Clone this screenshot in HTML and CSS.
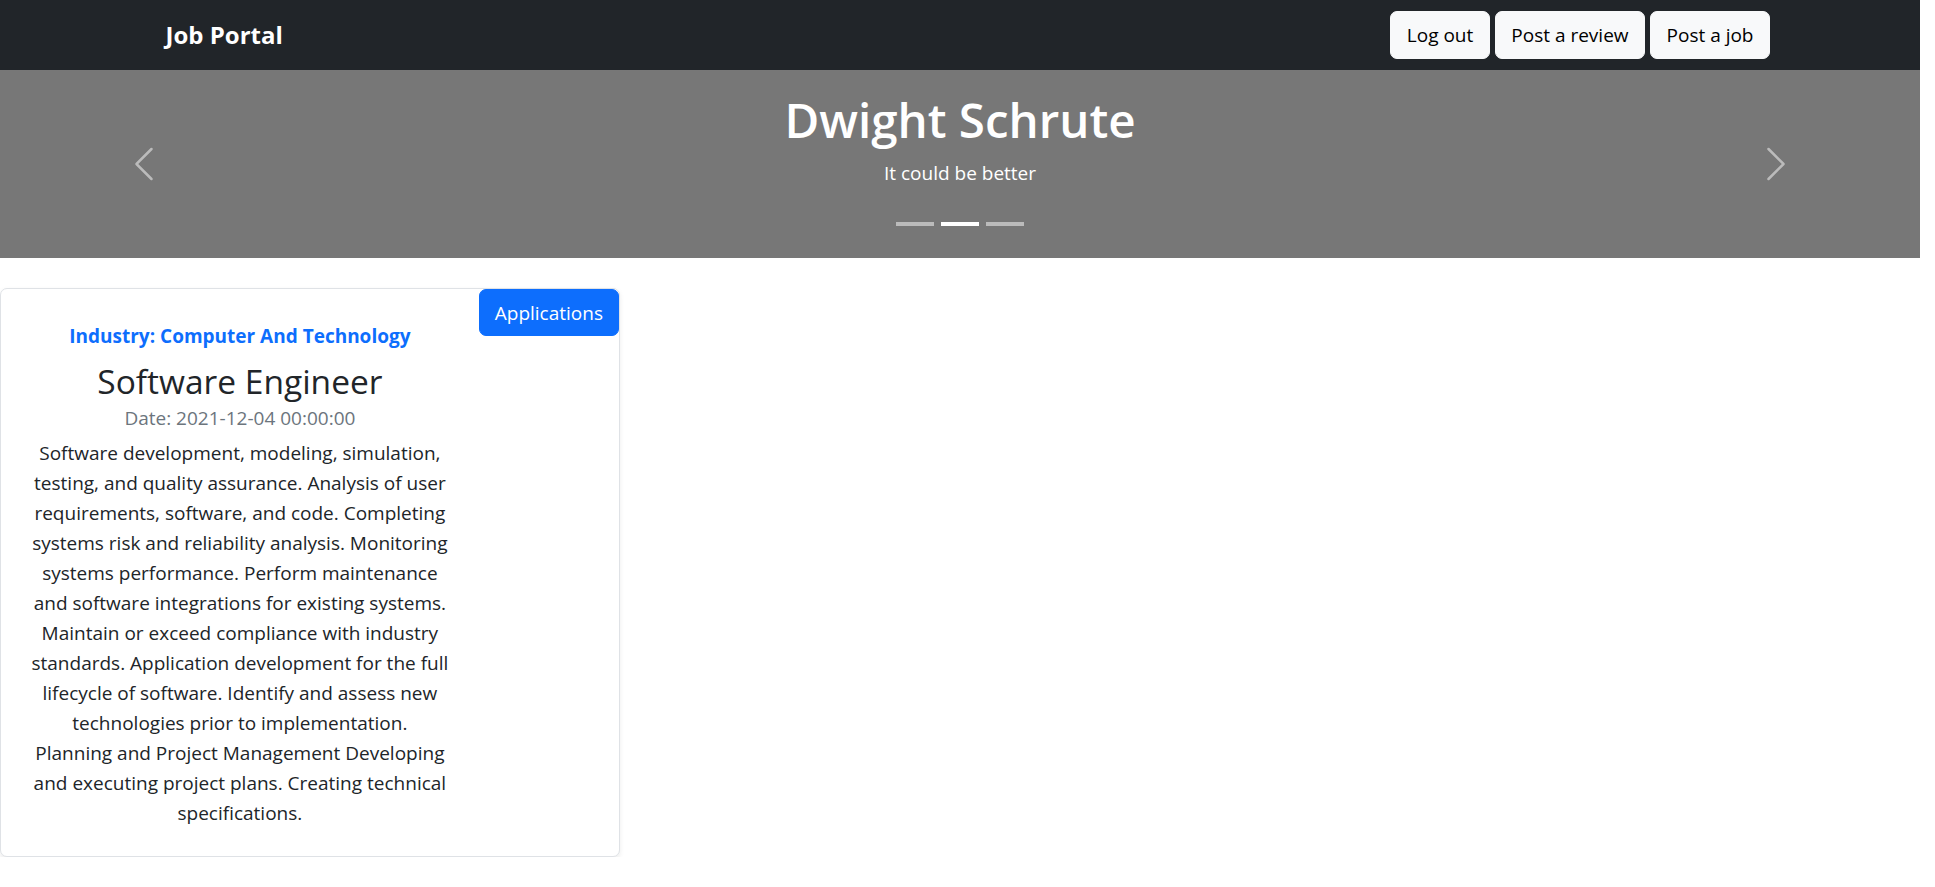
FILE: index.html
```html
<!DOCTYPE html>
<html lang="en">
<head>
<meta charset="utf-8">
<title>Job Portal</title>
<link rel="stylesheet" href="styles.css">
</head>
<body>
<div class="page">
  <nav class="navbar">
    <a class="brand" href="#">Job Portal</a>
    <div class="nav-actions">
      <button class="btn btn-light">Log out</button>
      <button class="btn btn-light">Post a review</button>
      <button class="btn btn-light">Post a job</button>
    </div>
  </nav>

  <section class="carousel">
    <h1 class="slide-title">Dwight Schrute</h1>
    <p class="slide-text">It could be better</p>
    <div class="indicators">
      <span class="indicator"></span>
      <span class="indicator active"></span>
      <span class="indicator"></span>
    </div>
    <a class="control control-prev" href="#" aria-label="Previous">
      <svg viewBox="0 0 16 16" width="40" height="40"><path fill="#fff" d="M11.354 1.646a.5.5 0 0 1 0 .708L5.707 8l5.647 5.646a.5.5 0 0 1-.708.708l-6-6a.5.5 0 0 1 0-.708l6-6a.5.5 0 0 1 .708 0z"/></svg>
    </a>
    <a class="control control-next" href="#" aria-label="Next">
      <svg viewBox="0 0 16 16" width="40" height="40"><path fill="#fff" d="M4.646 1.646a.5.5 0 0 1 .708 0l6 6a.5.5 0 0 1 0 .708l-6 6a.5.5 0 0 1-.708-.708L10.293 8 4.646 2.354a.5.5 0 0 1 0-.708z"/></svg>
    </a>
  </section>

  <main class="main">
    <div class="card">
      <div class="card-body">
        <h6 class="industry">Industry: Computer And Technology</h6>
        <h3 class="job-title">Software Engineer</h3>
        <p class="date">Date: 2021-12-04 00:00:00</p>
        <p class="desc">Software development, modeling, simulation,<br>testing, and quality assurance. Analysis of user<br>requirements, software, and code. Completing<br>systems risk and reliability analysis. Monitoring<br>systems performance. Perform maintenance<br>and software integrations for existing systems.<br>Maintain or exceed compliance with industry<br>standards. Application development for the full<br>lifecycle of software. Identify and assess new<br>technologies prior to implementation.<br>Planning and Project Management Developing<br>and executing project plans. Creating technical<br>specifications.</p>
      </div>
      <button class="btn btn-primary apply-btn">Applications</button>
    </div>
  </main>
</div>
</body>
</html>
```

FILE: styles.css
```css
* {
  box-sizing: border-box;
}

body {
  margin: 0;
  font-family: "Open Sans", "Liberation Sans", sans-serif;
  font-size: 19px;
  line-height: 30px;
  color: #212529;
  background: #fff;
}

.page {
  width: 1920px;
}

/* Navbar */
.navbar {
  background: #212529;
  height: 70px;
  display: flex;
  align-items: center;
  justify-content: space-between;
  padding: 0 150px;
}

.brand {
  color: #fff;
  font-weight: 700;
  font-size: 24px;
  line-height: 30px;
  margin-left: 15.5px;
  text-decoration: none;
}

.nav-actions {
  display: flex;
  gap: 5px;
}

.btn {
  display: inline-flex;
  align-items: center;
  justify-content: center;
  height: 48px;
  padding: 0 15.5px;
  border: 1px solid transparent;
  border-radius: 7px;
  font-family: inherit;
  font-size: 19px;
  line-height: 30px;
  cursor: pointer;
}

.btn-light {
  background: #f8f9fa;
  border-color: #f8f9fa;
  color: #000;
}

.btn-primary {
  background: #0d6efd;
  border-color: #0d6efd;
  color: #fff;
}

/* Carousel */
.carousel {
  position: relative;
  height: 188px;
  background: #777;
  color: #fff;
  text-align: center;
}

.slide-title {
  margin: 0;
  padding-top: 21px;
  font-size: 47.5px;
  line-height: 57px;
  font-weight: 600;
}

.slide-text {
  margin: 10px 0 0;
}

.indicators {
  position: absolute;
  left: 0;
  right: 0;
  bottom: 32px;
  display: flex;
  justify-content: center;
  gap: 7.5px;
}

.indicator {
  width: 37.5px;
  height: 4px;
  background: #fff;
  opacity: 0.5;
}

.indicator.active {
  opacity: 1;
}

.control {
  position: absolute;
  top: 0;
  bottom: 0;
  width: 288px;
  display: flex;
  align-items: center;
  justify-content: center;
  opacity: 0.5;
}

.control-prev {
  left: 0;
}

.control-next {
  right: 0;
}

/* Main */
.main {
  padding-top: 30px;
}

.card {
  width: 620px;
  display: flex;
  align-items: flex-start;
  background: #fff;
  border: 1px solid #dfe2e6;
  border-radius: 7px;
  box-shadow: 0 2.5px 5px rgba(0, 0, 0, 0.075);
}

.card-body {
  flex: 1;
  text-align: center;
  padding: 34.5px 20px 28px;
}

.industry {
  margin: 0 0 12px;
  font-size: 19px;
  line-height: 24px;
  font-weight: 700;
  color: #0d6efd;
}

.job-title {
  margin: 0 0 1px;
  font-size: 33.5px;
  line-height: 42px;
  font-weight: 500;
}

.date {
  margin: 0 0 5.5px;
  color: #6c757d;
}

.desc {
  margin: 0;
}

.apply-btn {
  flex: none;
  height: 47px;
  padding: 0 15px;
}
```
